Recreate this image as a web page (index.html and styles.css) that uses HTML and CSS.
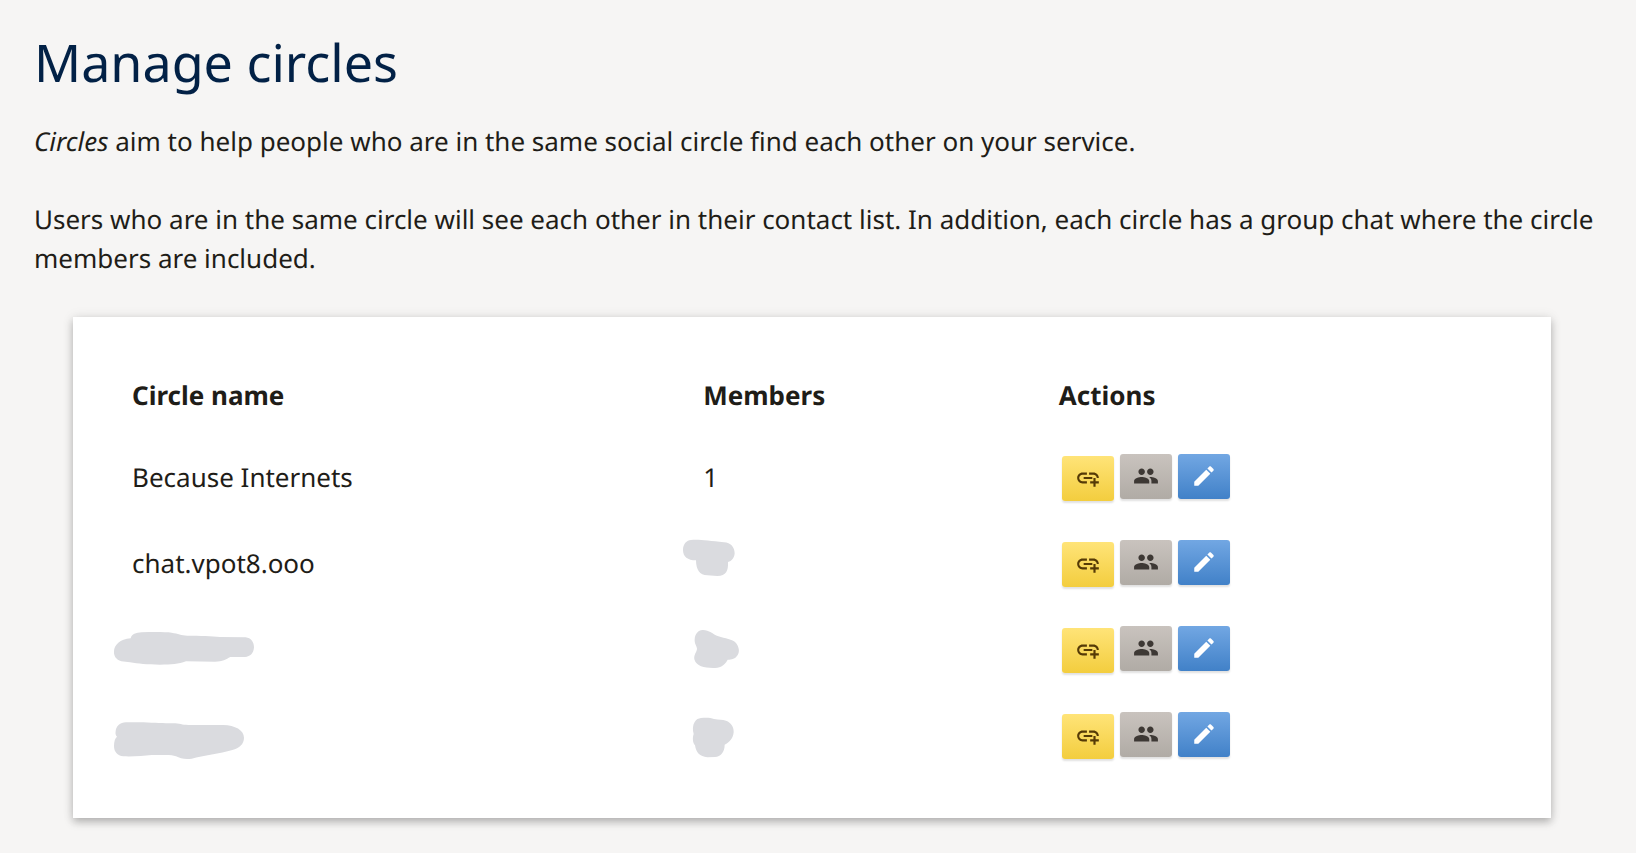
FILE: index.html
```html
<!DOCTYPE html>
<html lang="en">
<head>
<meta charset="utf-8">
<title>Manage circles</title>
<link rel="stylesheet" href="styles.css">
</head>
<body>
<svg class="sprite" aria-hidden="true">
  <symbol id="link" viewBox="0 0 24 24"><path d="M8 11h8v2H8v-2zm12.100 1H22c0-2.760-2.240-5-5-5h-4v1.900h4c1.710 0 3.100 1.390 3.100 3.100zM3.900 12c0-1.710 1.390-3.100 3.100-3.100h4V7H7c-2.760 0-5 2.240-5 5s2.240 5 5 5h4v-1.900H7c-1.710 0-3.100-1.390-3.100-3.100zM19 12h-2v3h-3v2h3v3h2v-3h3v-2h-3v-3z"/></symbol>
  <symbol id="group" viewBox="0 0 24 24"><path d="M16 11c1.660 0 2.990-1.340 2.990-3S17.660 5 16 5c-1.660 0-3 1.340-3 3s1.340 3 3 3zm-8 0c1.660 0 2.990-1.340 2.990-3S9.660 5 8 5C6.340 5 5 6.340 5 8s1.340 3 3 3zm0 2c-2.330 0-7 1.170-7 3.500V19h14v-2.500c0-2.330-4.670-3.500-7-3.500zm8 0c-.29 0-.62.02-.97.05 1.160.84 1.970 1.970 1.970 3.450V19h6v-2.500c0-2.330-4.670-3.500-7-3.500z"/></symbol>
  <symbol id="edit" viewBox="0 0 24 24"><path d="M3 17.250V21h3.750L17.810 9.940l-3.750-3.750L3 17.250zM20.710 7.040c.39-.39.39-1.020 0-1.410l-2.340-2.340c-.39-.39-1.020-.39-1.410 0l-1.830 1.830 3.750 3.750 1.830-1.830z"/></symbol>
</svg>
<main class="page">
  <h1 class="title">Manage circles</h1>
  <p class="text"><em>Circles</em> aim to help people who are in the same social circle find each other on your service.</p>
  <p class="text">Users who are in the same circle will see each other in their contact list. In addition, each circle has a group chat where the circle members are included.</p>
  <section class="card">
    <table class="circles">
      <thead>
        <tr><th class="col-name" scope="col">Circle name</th><th class="col-members" scope="col">Members</th><th scope="col">Actions</th></tr>
      </thead>
      <tbody>
        <tr>
          <td>Because Internets</td>
          <td>1</td>
          <td><div class="actions">
            <button class="btn btn-invite" aria-label="Create invite link"><svg class="icon"><use href="#link"/></svg></button>
            <button class="btn btn-members" aria-label="Show members"><svg class="icon"><use href="#group"/></svg></button>
            <button class="btn btn-edit" aria-label="Edit circle"><svg class="icon"><use href="#edit"/></svg></button>
          </div></td>
        </tr>
        <tr>
          <td>chat.vpot8.ooo</td>
          <td class="hidden-value"><svg class="blob" viewBox="42 -30 480 258"><path d="M66 30C94 28 120 33 165 37C185 38 197 52 197 70C196 84 188 94 177 96C178 123 172 137 145 138L115 136C92 136 81 118 81 91C56 91 42 80 42 60C42 42 53 31 66 30Z"/></svg></td>
          <td><div class="actions">
            <button class="btn btn-invite" aria-label="Create invite link"><svg class="icon"><use href="#link"/></svg></button>
            <button class="btn btn-members" aria-label="Show members"><svg class="icon"><use href="#group"/></svg></button>
            <button class="btn btn-edit" aria-label="Edit circle"><svg class="icon"><use href="#edit"/></svg></button>
          </div></td>
        </tr>
        <tr>
          <td class="hidden-value"><svg class="blob" viewBox="36 -42 480 258"><path d="M92 55C95 42 108 38 125 37C160 36 195 36 215 38C235 41 243 46 262 47C300 47 335 48 360 51L437 52C453 54 462 66 462 82C461 100 451 110 435 111L391 111C378 118 368 125 345 125L258 124C235 132 215 134 180 134C140 134 115 131 90 127L64 124C48 119 41 108 42 94C42 76 60 57 92 55Z"/></svg></td>
          <td class="hidden-value"><svg class="blob" viewBox="42 -27 480 258"><path d="M100 45C120 44 130 57 148 64C168 71 190 72 201 84C210 96 213 110 206 120C199 132 188 134 176 134C166 154 150 159 132 159C105 159 82 154 76 133C74 118 84 110 84 101C83 93 76 86 77 73C78 56 88 46 100 45Z"/></svg></td>
          <td><div class="actions">
            <button class="btn btn-invite" aria-label="Create invite link"><svg class="icon"><use href="#link"/></svg></button>
            <button class="btn btn-members" aria-label="Show members"><svg class="icon"><use href="#group"/></svg></button>
            <button class="btn btn-edit" aria-label="Edit circle"><svg class="icon"><use href="#edit"/></svg></button>
          </div></td>
        </tr>
        <tr>
          <td class="hidden-value"><svg class="blob" viewBox="36 216 480 258"><path d="M78 307L130 307C165 309 190 310 218 310C240 310 245 315 265 315L370 315C405 316 432 330 432 353C432 372 418 384 397 390C360 401 310 406 275 416C255 419 240 415 228 409C215 403 200 405 155 405C130 408 100 410 70 409C52 407 42 395 42 378C42 364 45 355 51 350C46 345 46 340 47 333C49 318 60 308 78 307Z"/></svg></td>
          <td class="hidden-value"><svg class="blob" viewBox="42 231 480 258"><path d="M96 309C112 308 125 308 135 312C150 315 160 314 171 317C187 323 195 337 194 352C192 370 182 382 167 389C167 412 155 424 138 426L115 427C92 425 81 413 78 391C71 383 70 369 74 357C70 345 71 330 77 321C82 313 88 310 96 309Z"/></svg></td>
          <td><div class="actions">
            <button class="btn btn-invite" aria-label="Create invite link"><svg class="icon"><use href="#link"/></svg></button>
            <button class="btn btn-members" aria-label="Show members"><svg class="icon"><use href="#group"/></svg></button>
            <button class="btn btn-edit" aria-label="Edit circle"><svg class="icon"><use href="#edit"/></svg></button>
          </div></td>
        </tr>
      </tbody>
    </table>
  </section>
</main>
</body>
</html>
```
FILE: styles.css
```css
* {
  box-sizing: border-box;
}

body {
  margin: 0;
  background: #f6f5f4;
  color: #1f1d18;
  font-family: "Noto Sans", sans-serif;
  font-size: 26px;
  line-height: 39px;
  text-rendering: geometricPrecision;
}

.sprite {
  display: none;
}

.page {
  padding: 31px 34px 36px;
}

.title {
  margin: 0 0 27px;
  color: #022146;
  font-size: 52px;
  font-weight: 400;
  line-height: 64px;
}

.text {
  margin: 0 0 39px;
}

.card {
  margin: 0 51px 0 39px;
  padding: 39px 39px 40px;
  background: #fff;
  box-shadow: 0 4px 8px rgba(0, 0, 0, 0.25), 0 0 12px rgba(0, 0, 0, 0.08);
}

.circles {
  width: 100%;
  table-layout: fixed;
  border-collapse: collapse;
}

.circles th {
  height: 78px;
  padding: 0 20px;
  text-align: left;
  font-weight: 700;
}

.circles td {
  height: 86px;
  padding: 0 20px;
}

.circles .hidden-value {
  padding: 0;
}

.col-name {
  width: 40.8%;
}

.col-members {
  width: 25.4%;
}

.blob {
  display: block;
  width: 160px;
  height: 86px;
  fill: #dadbdf;
}

.actions {
  display: flex;
  align-items: flex-start;
  gap: 6px;
  padding: 0 3px;
}

.btn {
  display: flex;
  align-items: center;
  justify-content: center;
  width: 52px;
  height: 45px;
  padding: 0;
  border: 0;
  border-radius: 3px;
  box-shadow: 0 2px 2px rgba(0, 0, 0, 0.12);
}

.btn-invite {
  margin-top: 2px;
  background: linear-gradient(#ffe478, #f3cd3e);
  color: #553a06;
}

.btn-members {
  background: linear-gradient(#c9c3be, #b0aba5);
  color: #3d3834;
}

.btn-edit {
  background: linear-gradient(#72a7e3, #4181c8);
  color: #fff;
}

.icon {
  width: 26px;
  height: 26px;
  fill: currentColor;
}
```
